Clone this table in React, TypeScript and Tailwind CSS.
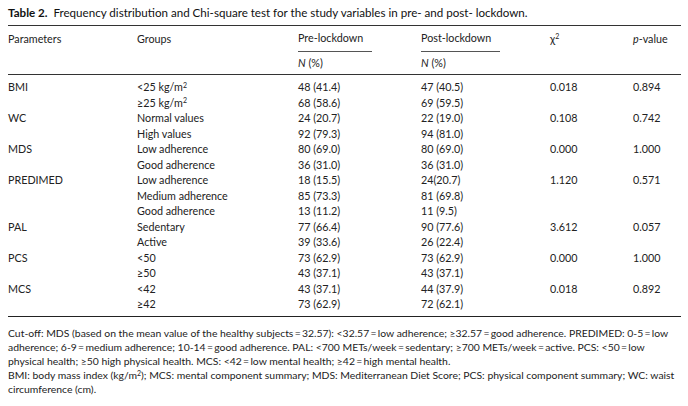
type Row = {
  param?: string;
  group: React.ReactNode;
  pre: string;
  post: string;
  chi?: string;
  p?: string;
};

const kg = (sign: string) => (
  <>
    {sign}25 kg/m<sup className="text-[7px]">2</sup>
  </>
);

const rows: Row[] = [
  { param: "BMI", group: kg("<"), pre: "48 (41.4)", post: "47 (40.5)", chi: "0.018", p: "0.894" },
  { group: kg("≥"), pre: "68 (58.6)", post: "69 (59.5)" },
  { param: "WC", group: "Normal values", pre: "24 (20.7)", post: "22 (19.0)", chi: "0.108", p: "0.742" },
  { group: "High values", pre: "92 (79.3)", post: "94 (81.0)" },
  { param: "MDS", group: "Low adherence", pre: "80 (69.0)", post: "80 (69.0)", chi: "0.000", p: "1.000" },
  { group: "Good adherence", pre: "36 (31.0)", post: "36 (31.0)" },
  { param: "PREDIMED", group: "Low adherence", pre: "18 (15.5)", post: "24(20.7)", chi: "1.120", p: "0.571" },
  { group: "Medium adherence", pre: "85 (73.3)", post: "81 (69.8)" },
  { group: "Good adherence", pre: "13 (11.2)", post: "11 (9.5)" },
  { param: "PAL", group: "Sedentary", pre: "77 (66.4)", post: "90 (77.6)", chi: "3.612", p: "0.057" },
  { group: "Active", pre: "39 (33.6)", post: "26 (22.4)" },
  { param: "PCS", group: "<50", pre: "73 (62.9)", post: "73 (62.9)", chi: "0.000", p: "1.000" },
  { group: "≥50", pre: "43 (37.1)", post: "43 (37.1)" },
  { param: "MCS", group: "<42", pre: "43 (37.1)", post: "44 (37.9)", chi: "0.018", p: "0.892" },
  { group: "≥42", pre: "73 (62.9)", post: "72 (62.1)" },
];

const cols = "grid grid-cols-[129px_161px_123px_129px_83px_1fr]";

// thin spaces around "=" as in the printed note
const eq = "\u2009=\u2009";

export default function App() {
  return (
    <div
      className="h-[406px] w-[688px] bg-white pl-2 pr-[7px] pt-[6px] text-[10.75px] text-[#222]"
      style={{ fontFamily: "Lato, 'Open Sans', sans-serif" }}
    >
      <div className="h-[14px] leading-[14px] text-[11.6px] text-[#111]">
        <span className="font-bold">Table 2.</span>&nbsp; Frequency distribution and Chi-square test for the
        study variables in pre- and post- lockdown.
      </div>

      <div className="mt-[5px] border-t border-[#333]">
        {/* Header */}
        <div className={`${cols} h-[26px] items-center`}>
          <div>Parameters</div>
          <div>Groups</div>
          <div className="flex h-full items-center">
            <span className="flex h-full w-[74px] items-center border-b border-[#555]">Pre-lockdown</span>
          </div>
          <div className="flex h-full items-center">
            <span className="flex h-full w-[79px] items-center border-b border-[#555]">Post-lockdown</span>
          </div>
          <div>
            χ<sup className="text-[7px]">2</sup>
          </div>
          <div>
            <i>p</i>-value
          </div>
        </div>
        <div className={`${cols} h-[23px] items-center border-b border-[#333]`}>
          <div />
          <div />
          <div>
            <i>N</i> (%)
          </div>
          <div>
            <i>N</i> (%)
          </div>
          <div />
          <div />
        </div>

        {/* Body */}
        <div className="border-b border-[#222] pb-[4px] pt-[4px]">
          {rows.map((r, i) => (
            <div className={`${cols} h-[15.5px] items-center leading-[15.5px]`} key={i}>
              <div>{r.param}</div>
              <div>{r.group}</div>
              <div>{r.pre}</div>
              <div>{r.post}</div>
              <div>{r.chi}</div>
              <div>{r.p}</div>
            </div>
          ))}
        </div>
      </div>

      <div className="mt-[9px] whitespace-nowrap text-[10.4px] leading-[14.2px]">
        <div>
          Cut-off: MDS (based on the mean value of the healthy subjects{eq}32.57): &lt;32.57{eq}low adherence; ≥32.57
          {eq}good adherence. PREDIMED: 0-5{eq}low
        </div>
        <div>
          adherence; 6-9{eq}medium adherence; 10-14{eq}good adherence. PAL: &lt;700 METs/week{eq}sedentary; ≥700
          METs/week{eq}active. PCS: &lt;50{eq}low
        </div>
        <div>
          physical health; ≥50 high physical health. MCS: &lt;42{eq}low mental health; ≥42{eq}high mental health.
        </div>
        <div>
          BMI: body mass index (kg/m<sup className="text-[7px]">2</sup>); MCS: mental component summary; MDS:
          Mediterranean Diet Score; PCS: physical component summary; WC: waist
        </div>
        <div>circumference (cm).</div>
      </div>
    </div>
  );
}
